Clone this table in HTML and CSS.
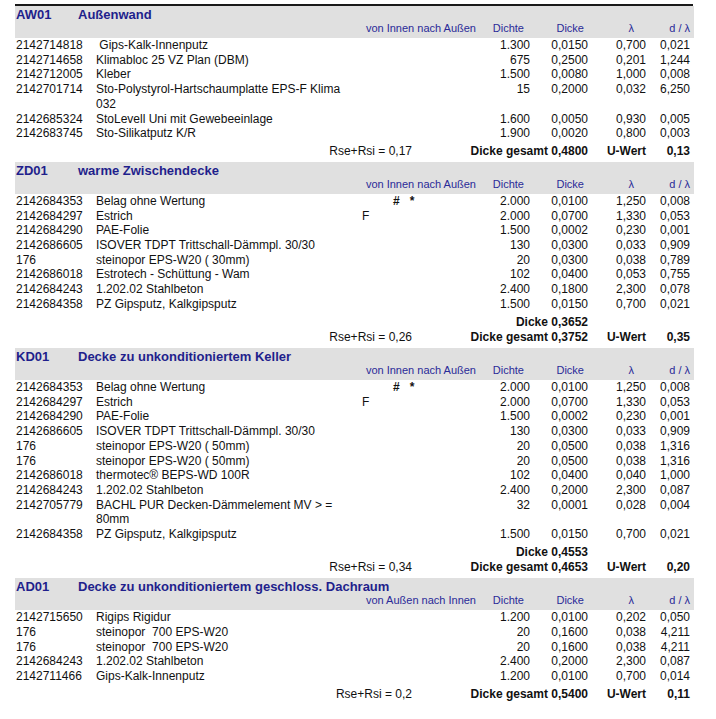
FILE: index.html
```html
<!DOCTYPE html>
<html lang="de">
<head>
<meta charset="utf-8">
<title>Bauteile</title>
<link rel="stylesheet" href="styles.css">
</head>
<body>
<div class="page">
  <div class="rule"></div>

  <section class="part">
    <div class="head">
      <div class="title"><span class="t-code">AW01</span><span class="t-name">Außenwand</span></div>
      <div class="cols"><span class="dir">von Innen nach Außen</span><span class="h-dichte">Dichte</span><span class="h-dicke">Dicke</span><span class="h-lam">λ</span><span class="h-dl">d / λ</span></div>
    </div>
    <div class="row"><span class="code">2142714818</span><span class="name">&nbsp;Gips-Kalk-Innenputz</span><span class="flag"></span><span class="num">1.300</span><span class="num">0,0150</span><span class="num">0,700</span><span class="num">0,021</span></div>
    <div class="row"><span class="code">2142714658</span><span class="name">Klimabloc 25 VZ Plan (DBM)</span><span class="flag"></span><span class="num">675</span><span class="num">0,2500</span><span class="num">0,201</span><span class="num">1,244</span></div>
    <div class="row"><span class="code">2142712005</span><span class="name">Kleber</span><span class="flag"></span><span class="num">1.500</span><span class="num">0,0080</span><span class="num">1,000</span><span class="num">0,008</span></div>
    <div class="row"><span class="code">2142701714</span><span class="name">Sto-Polystyrol-Hartschaumplatte EPS-F Klima 032</span><span class="flag"></span><span class="num">15</span><span class="num">0,2000</span><span class="num">0,032</span><span class="num">6,250</span></div>
    <div class="row"><span class="code">2142685324</span><span class="name">StoLevell Uni mit Gewebeeinlage</span><span class="flag"></span><span class="num">1.600</span><span class="num">0,0050</span><span class="num">0,930</span><span class="num">0,005</span></div>
    <div class="row"><span class="code">2142683745</span><span class="name">Sto-Silikatputz K/R</span><span class="flag"></span><span class="num">1.900</span><span class="num">0,0020</span><span class="num">0,800</span><span class="num">0,003</span></div>
    <div class="sums">
      <div class="sum"><span class="rs">Rse+Rsi = 0,17</span><span class="b">Dicke gesamt 0,4800</span><span class="b">U-Wert</span><span class="b">0,13</span></div>
    </div>
  </section>

  <section class="part">
    <div class="head">
      <div class="title"><span class="t-code">ZD01</span><span class="t-name">warme Zwischendecke</span></div>
      <div class="cols"><span class="dir">von Innen nach Außen</span><span class="h-dichte">Dichte</span><span class="h-dicke">Dicke</span><span class="h-lam">λ</span><span class="h-dl">d / λ</span></div>
    </div>
    <div class="row"><span class="code">2142684353</span><span class="name">Belag ohne Wertung</span><span class="flag"><span class="hash">#&nbsp;&nbsp;&nbsp;*</span></span><span class="num">2.000</span><span class="num">0,0100</span><span class="num">1,250</span><span class="num">0,008</span></div>
    <div class="row"><span class="code">2142684297</span><span class="name">Estrich</span><span class="flag">F</span><span class="num">2.000</span><span class="num">0,0700</span><span class="num">1,330</span><span class="num">0,053</span></div>
    <div class="row"><span class="code">2142684290</span><span class="name">PAE-Folie</span><span class="flag"></span><span class="num">1.500</span><span class="num">0,0002</span><span class="num">0,230</span><span class="num">0,001</span></div>
    <div class="row"><span class="code">2142686605</span><span class="name">ISOVER TDPT Trittschall-Dämmpl. 30/30</span><span class="flag"></span><span class="num">130</span><span class="num">0,0300</span><span class="num">0,033</span><span class="num">0,909</span></div>
    <div class="row"><span class="code">176</span><span class="name">steinopor EPS-W20 ( 30mm)</span><span class="flag"></span><span class="num">20</span><span class="num">0,0300</span><span class="num">0,038</span><span class="num">0,789</span></div>
    <div class="row"><span class="code">2142686018</span><span class="name">Estrotech - Schüttung - Wam</span><span class="flag"></span><span class="num">102</span><span class="num">0,0400</span><span class="num">0,053</span><span class="num">0,755</span></div>
    <div class="row"><span class="code">2142684243</span><span class="name">1.202.02 Stahlbeton</span><span class="flag"></span><span class="num">2.400</span><span class="num">0,1800</span><span class="num">2,300</span><span class="num">0,078</span></div>
    <div class="row"><span class="code">2142684358</span><span class="name">PZ Gipsputz, Kalkgipsputz</span><span class="flag"></span><span class="num">1.500</span><span class="num">0,0150</span><span class="num">0,700</span><span class="num">0,021</span></div>
    <div class="sums">
      <div class="sum"><span class="rs"></span><span class="b">Dicke 0,3652</span><span></span><span></span></div>
      <div class="sum"><span class="rs">Rse+Rsi = 0,26</span><span class="b">Dicke gesamt 0,3752</span><span class="b">U-Wert</span><span class="b">0,35</span></div>
    </div>
  </section>

  <section class="part">
    <div class="head">
      <div class="title"><span class="t-code">KD01</span><span class="t-name">Decke zu unkonditioniertem Keller</span></div>
      <div class="cols"><span class="dir">von Innen nach Außen</span><span class="h-dichte">Dichte</span><span class="h-dicke">Dicke</span><span class="h-lam">λ</span><span class="h-dl">d / λ</span></div>
    </div>
    <div class="row"><span class="code">2142684353</span><span class="name">Belag ohne Wertung</span><span class="flag"><span class="hash">#&nbsp;&nbsp;&nbsp;*</span></span><span class="num">2.000</span><span class="num">0,0100</span><span class="num">1,250</span><span class="num">0,008</span></div>
    <div class="row"><span class="code">2142684297</span><span class="name">Estrich</span><span class="flag">F</span><span class="num">2.000</span><span class="num">0,0700</span><span class="num">1,330</span><span class="num">0,053</span></div>
    <div class="row"><span class="code">2142684290</span><span class="name">PAE-Folie</span><span class="flag"></span><span class="num">1.500</span><span class="num">0,0002</span><span class="num">0,230</span><span class="num">0,001</span></div>
    <div class="row"><span class="code">2142686605</span><span class="name">ISOVER TDPT Trittschall-Dämmpl. 30/30</span><span class="flag"></span><span class="num">130</span><span class="num">0,0300</span><span class="num">0,033</span><span class="num">0,909</span></div>
    <div class="row"><span class="code">176</span><span class="name">steinopor EPS-W20 ( 50mm)</span><span class="flag"></span><span class="num">20</span><span class="num">0,0500</span><span class="num">0,038</span><span class="num">1,316</span></div>
    <div class="row"><span class="code">176</span><span class="name">steinopor EPS-W20 ( 50mm)</span><span class="flag"></span><span class="num">20</span><span class="num">0,0500</span><span class="num">0,038</span><span class="num">1,316</span></div>
    <div class="row"><span class="code">2142686018</span><span class="name">thermotec® BEPS-WD 100R</span><span class="flag"></span><span class="num">102</span><span class="num">0,0400</span><span class="num">0,040</span><span class="num">1,000</span></div>
    <div class="row"><span class="code">2142684243</span><span class="name">1.202.02 Stahlbeton</span><span class="flag"></span><span class="num">2.400</span><span class="num">0,2000</span><span class="num">2,300</span><span class="num">0,087</span></div>
    <div class="row"><span class="code">2142705779</span><span class="name">BACHL PUR Decken-Dämmelement MV &gt; = 80mm</span><span class="flag"></span><span class="num">32</span><span class="num">0,0001</span><span class="num">0,028</span><span class="num">0,004</span></div>
    <div class="row"><span class="code">2142684358</span><span class="name">PZ Gipsputz, Kalkgipsputz</span><span class="flag"></span><span class="num">1.500</span><span class="num">0,0150</span><span class="num">0,700</span><span class="num">0,021</span></div>
    <div class="sums">
      <div class="sum"><span class="rs"></span><span class="b">Dicke 0,4553</span><span></span><span></span></div>
      <div class="sum"><span class="rs">Rse+Rsi = 0,34</span><span class="b">Dicke gesamt 0,4653</span><span class="b">U-Wert</span><span class="b">0,20</span></div>
    </div>
  </section>

  <section class="part">
    <div class="head">
      <div class="title"><span class="t-code">AD01</span><span class="t-name">Decke zu unkonditioniertem geschloss. Dachraum</span></div>
      <div class="cols"><span class="dir">von Außen nach Innen</span><span class="h-dichte">Dichte</span><span class="h-dicke">Dicke</span><span class="h-lam">λ</span><span class="h-dl">d / λ</span></div>
    </div>
    <div class="row"><span class="code">2142715650</span><span class="name">Rigips Rigidur</span><span class="flag"></span><span class="num">1.200</span><span class="num">0,0100</span><span class="num">0,202</span><span class="num">0,050</span></div>
    <div class="row"><span class="code">176</span><span class="name">steinopor&nbsp; 700 EPS-W20</span><span class="flag"></span><span class="num">20</span><span class="num">0,1600</span><span class="num">0,038</span><span class="num">4,211</span></div>
    <div class="row"><span class="code">176</span><span class="name">steinopor&nbsp; 700 EPS-W20</span><span class="flag"></span><span class="num">20</span><span class="num">0,1600</span><span class="num">0,038</span><span class="num">4,211</span></div>
    <div class="row"><span class="code">2142684243</span><span class="name">1.202.02 Stahlbeton</span><span class="flag"></span><span class="num">2.400</span><span class="num">0,2000</span><span class="num">2,300</span><span class="num">0,087</span></div>
    <div class="row"><span class="code">2142711466</span><span class="name">Gips-Kalk-Innenputz</span><span class="flag"></span><span class="num">1.200</span><span class="num">0,0100</span><span class="num">0,700</span><span class="num">0,014</span></div>
    <div class="sums">
      <div class="sum"><span class="rs">Rse+Rsi = 0,2</span><span class="b">Dicke gesamt 0,5400</span><span class="b">U-Wert</span><span class="b">0,11</span></div>
    </div>
  </section>
</div>
</body>
</html>
```

FILE: styles.css
```css
html, body {
  margin: 0;
  padding: 0;
  background: #ffffff;
}

body {
  font-family: "Liberation Sans", Arial, sans-serif;
  font-size: 12px;
  color: #111111;
}

.page {
  width: 679px;
  margin-left: 15px;
  padding-top: 4px;
}

.rule {
  height: 2px;
  background: #1a1a1a;
  margin-right: 1px;
}

.part {
  margin-bottom: 2.5px;
}

.head {
  background: #e0e0e0;
  height: 32px;
  box-sizing: border-box;
  padding-top: 2px;
}

.title {
  display: flex;
  font-size: 13px;
  font-weight: bold;
  line-height: 14px;
  color: #1f1f8c;
}

.t-code {
  width: 62px;
  padding-left: 1px;
}

.cols {
  display: grid;
  grid-template-columns: 461px 54px 58px 58px 44px;
  font-size: 11px;
  line-height: 13px;
  color: #2a2a98;
  text-align: right;
}

.h-dichte { padding-right: 6px; }
.h-dicke { padding-right: 4px; }
.h-lam { padding-right: 12px; }
.h-dl { padding-right: 0; }

.row {
  display: grid;
  grid-template-columns: 81px 250px 130px 54px 58px 58px 44px;
  line-height: 14.7px;
}

.code {
  padding-left: 1px;
}

.name {
  padding-right: 4px;
}

.flag {
  padding-left: 16px;
  white-space: pre;
}

.hash {
  margin-left: 31px;
  font-weight: bold;
}

.num {
  text-align: right;
}

.sums {
  padding-top: 3px;
}

.sum {
  display: grid;
  grid-template-columns: 397px 176px 58px 44px;
  line-height: 15.5px;
  text-align: right;
}

.b {
  font-weight: bold;
}
```
